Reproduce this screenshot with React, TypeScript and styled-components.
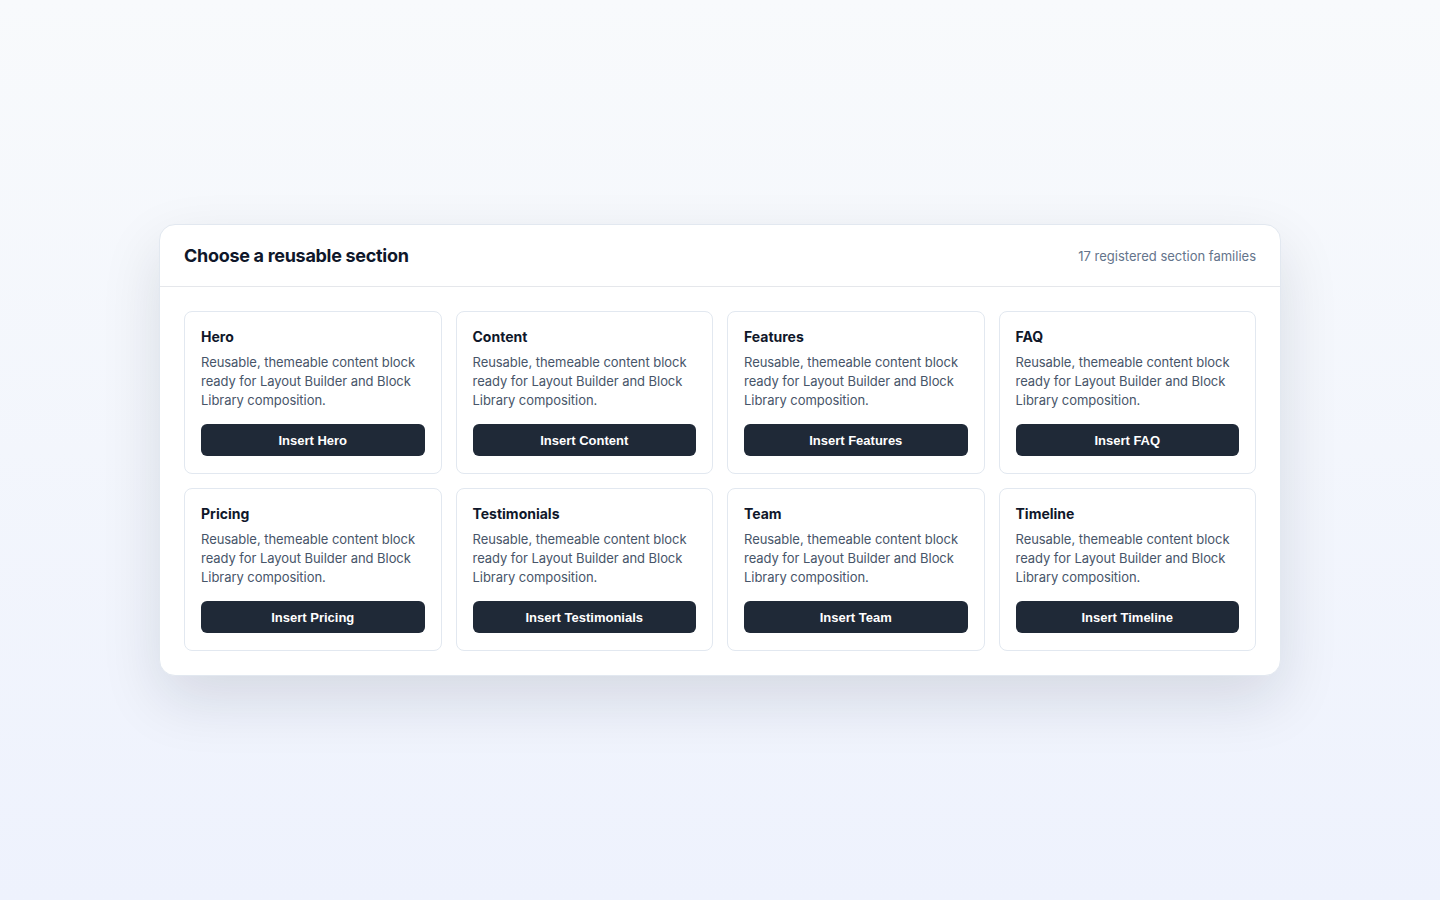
import styled, { createGlobalStyle } from "styled-components";

const GlobalStyle = createGlobalStyle`
  html, body {
    margin: 0;
    padding: 0;
  }
  body {
    font-family: Inter, "Noto Sans", sans-serif;
    background: linear-gradient(180deg, #f8fafc 0%, #eef2fd 100%);
    min-height: 100vh;
  }
`;

const Page = styled.main`
  min-height: 100vh;
  display: flex;
  align-items: center;
  justify-content: center;
`;

const Panel = styled.section`
  width: 1120px;
  background: #ffffff;
  border: 1px solid #e2e8f0;
  border-radius: 16px;
  box-shadow: 0 24px 60px rgba(15, 23, 42, 0.12);
  overflow: hidden;
`;

const Header = styled.header`
  display: flex;
  align-items: center;
  justify-content: space-between;
  height: 61px;
  padding: 0 24px;
  border-bottom: 1px solid #e5e7eb;
`;

const Heading = styled.h2`
  margin: 0;
  font-size: 18px;
  font-weight: 700;
  color: #0f172a;
  letter-spacing: -0.3px;
`;

const Count = styled.span`
  font-size: 13px;
  color: #64748b;
`;

const Grid = styled.div`
  display: grid;
  grid-template-columns: repeat(4, 1fr);
  gap: 14px;
  padding: 24px;
`;

const Card = styled.article`
  display: flex;
  flex-direction: column;
  padding: 16px 16px 17px;
  border: 1px solid #e2e8f0;
  border-radius: 8px;
  background: #fff;
`;

const CardTitle = styled.h3`
  margin: 0 0 7px;
  font-size: 14px;
  line-height: 18px;
  font-weight: 700;
  color: #0f172a;
`;

const CardText = styled.p`
  margin: 0 0 14px;
  font-size: 13px;
  line-height: 19px;
  color: #475569;
  letter-spacing: -0.05px;
`;

const InsertButton = styled.button`
  height: 32px;
  border: none;
  border-radius: 6px;
  background: #1f2937;
  color: #fff;
  font-family: "Liberation Sans", Arial, sans-serif;
  font-size: 13px;
  font-weight: 700;
  cursor: pointer;
`;

const sections = [
  "Hero",
  "Content",
  "Features",
  "FAQ",
  "Pricing",
  "Testimonials",
  "Team",
  "Timeline",
];

export default function App() {
  return (
    <>
      <GlobalStyle />
      <Page>
        <Panel>
          <Header>
            <Heading>Choose a reusable section</Heading>
            <Count>17 registered section families</Count>
          </Header>
          <Grid>
            {sections.map((name) => (
              <Card key={name}>
                <CardTitle>{name}</CardTitle>
                <CardText>
                  Reusable, themeable content block ready for Layout Builder and Block Library composition.
                </CardText>
                <InsertButton>Insert {name}</InsertButton>
              </Card>
            ))}
          </Grid>
        </Panel>
      </Page>
    </>
  );
}
